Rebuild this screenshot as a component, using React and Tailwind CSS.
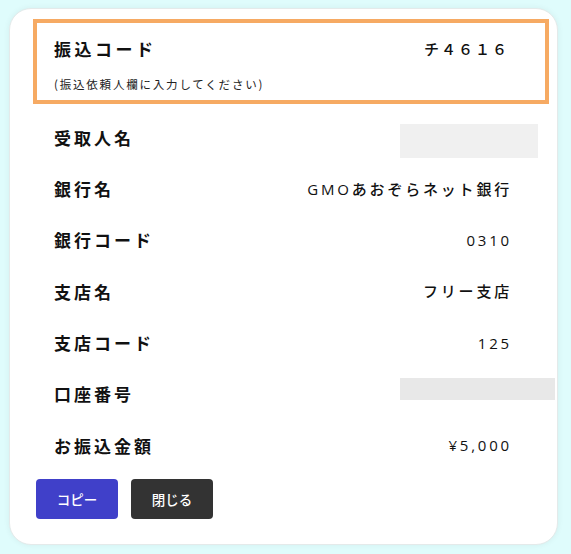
export default function App() {
  const rows = [
    { label: '受取人名', blank: 'a' },
    { label: '銀行名', value: 'GMOあおぞらネット銀行' },
    { label: '銀行コード', value: '0310' },
    { label: '支店名', value: 'フリー支店' },
    { label: '支店コード', value: '125' },
    { label: '口座番号', blank: 'b' },
    { label: 'お振込金額', value: '¥5,000' },
  ];

  return (
    <div
      className="min-h-screen bg-[#dffcfc] pt-[8px] pl-[9px] pr-[13px] pb-[9px]"
      style={{ fontFamily: '"Noto Sans CJK JP", "Noto Sans", sans-serif' }}
    >
      <div className="w-[549px] h-[537px] rounded-[22px] bg-white border border-[#e4eaea] shadow-[0_0_6px_rgba(0,0,0,0.06)] pt-[10px] pl-[23px] pr-[8px]">
        {/* 振込コード */}
        <div className="border-[4px] border-[#f6aa63] h-[85px] pl-[17px] pr-[36px] pt-[14px]">
          <div className="flex items-center justify-between h-[24px]">
            <span className="text-[17px] font-bold tracking-[3.5px] text-[#111]">振込コード</span>
            <span className="text-[15px] font-medium tracking-[2px] text-[#111]">チ４６１６</span>
          </div>
          <p className="mt-[15px] text-[11.5px] leading-[16px] tracking-[1.8px] text-[#222]">
            (振込依頼人欄に入力してください)
          </p>
        </div>

        <div className="mt-[8px]">
          {rows.map((row) => (
            <div key={row.label} className="flex items-center justify-between h-[51.3px] pl-[21px] pr-[37px]">
              <span className="text-[17px] font-bold tracking-[3px] text-[#111]">{row.label}</span>
              {row.blank === 'a' && (
                <div className="w-[138px] h-[34px] bg-[#f0f0f0] mr-[-26px] mt-[6px]" />
              )}
              {row.blank === 'b' && (
                <div className="w-[155px] h-[22px] bg-[#e8e8e8] mr-[-43px] mb-[10px]" />
              )}
              {row.value && (
                <span
                  className="text-[15px] font-medium tracking-[2.8px] text-[#111]"
                  style={{ fontFamily: '"Open Sans", "Noto Sans CJK JP", sans-serif' }}
                >
                  {row.value}
                </span>
              )}
            </div>
          ))}
        </div>

        <div className="flex gap-[13px] ml-[3px] mt-[8px]">
          <button className="w-[82px] h-[40px] rounded-[4px] bg-[#4040c9] text-white text-[13.5px] font-medium">
            コピー
          </button>
          <button className="w-[82px] h-[40px] rounded-[4px] bg-[#333333] text-white text-[13.5px] font-medium">
            閉じる
          </button>
        </div>
      </div>
    </div>
  );
}
